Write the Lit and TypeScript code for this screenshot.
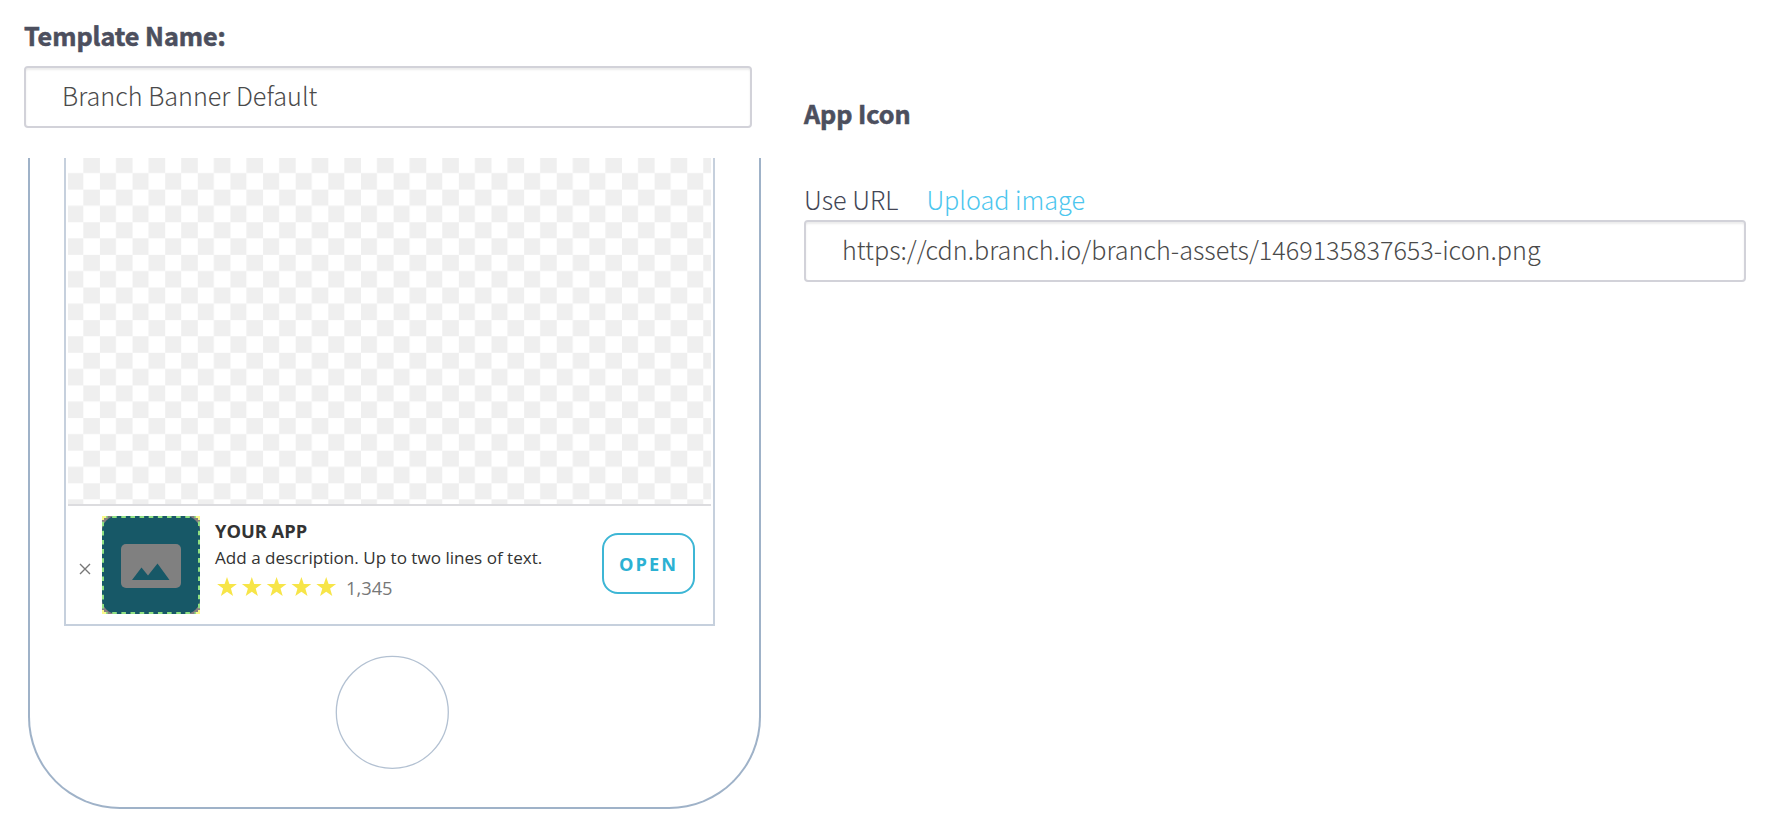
import { LitElement, html, css, svg } from "lit";
import { customElement } from "lit/decorators.js";

@customElement("app-root")
export class AppRoot extends LitElement {
  static styles = css`
    :host {
      display: flex;
      box-sizing: border-box;
      width: 1780px;
      height: 838px;
      background: #fff;
      padding-left: 24px;
      gap: 44px;
      overflow: hidden;
      color: #4c4f5e;
      font-family: "Noto Sans CJK SC", "Noto Sans", sans-serif;
      font-size: 25.17px;
      font-weight: 300;
    }
    .left { width: 736px; flex: none; }
    .right { width: 942px; flex: none; padding-top: 93px; }
    .title { font-weight: 700; line-height: 40px; height: 40px; white-space: nowrap; -webkit-text-stroke: 0.6px #4c4f5e; letter-spacing: -0.04px; }
    .left .title { margin-top: 15px; }
    .field {
      box-sizing: border-box;
      height: 62px;
      border: 2px solid #d2d2d9;
      border-radius: 4px;
      box-shadow: inset 0 2px 2px rgba(0, 0, 0, 0.075);
      padding: 0 36px;
      line-height: 54px;
      color: #4a4a4a;
      white-space: nowrap;
    }
    .left .field { width: 728px; margin-top: 11px; }
    .tabs { display: flex; gap: 28px; height: 40px; line-height: 40px; margin-top: 46px; white-space: nowrap; color: #434655; }
    .tabs .link { color: #4cc6ee; }
    .right .field { margin-top: 1px; }
    .phone {
      display: flex;
      flex-direction: column;
      align-items: center;
      box-sizing: border-box;
      width: 733px;
      height: 651px;
      margin: 30px 0 0 4px;
      border: 2px solid #9fb2c8;
      border-top: 0;
      border-radius: 0 0 92px 92px;
    }
    .screen {
      box-sizing: border-box;
      width: 651px;
      height: 468px;
      border: 2px solid #c6d0dd;
      border-top: 0;
      padding: 0 2px;
      margin-left: -10px;
    }
    .checker { display: block; width: 643px; height: 346px; }
    .banner {
      display: flex;
      height: 119px;
      width: 643px;
      border-top: 2px solid #dcdcdf;
      font-family: "Open Sans", "Noto Sans", sans-serif;
    }
    .close { margin: 57px 0 0 11px; width: 12px; height: 12px; flex: none; }
    .icon { margin: 10px 0 0 11px; width: 98px; height: 98px; flex: none; }
    .info { margin: 11px 0 0 15px; width: 387px; flex: none; white-space: nowrap; color: #333; }
    .app { font-size: 18.3px; line-height: 28px; font-weight: 700; }
    .desc { font-size: 17.08px; line-height: 26px; font-weight: 400; }
    .rating { display: flex; align-items: center; height: 32px; gap: 9px; font-size: 18.3px; font-weight: 400; color: #777; }
    .stars { width: 122px; height: 20px; }
    .open {
      box-sizing: border-box;
      flex: none;
      margin-top: 27px;
      width: 93px;
      height: 61px;
      border: 2px solid #3db6d5;
      border-radius: 16px;
      color: #2cb1d3;
      font-size: 18.2px;
      font-weight: 700;
      letter-spacing: 2px;
      line-height: 58px;
      text-align: center;
    }
    .home { width: 114px; height: 114px; margin: 29px 0 0 -5px; }
  `;

  private star(i: number) {
    return svg`<path transform="translate(${i * 24.8 + 12} 10.6)" fill="#f7e548"
      d="M0-10.600 2.400-3.500 9.900-3.500 3.900 1 6.100 8.500 0 4.200-6.100 8.500-3.900 1-9.900-3.500-2.400-3.500Z" />`;
  }

  render() {
    return html`
      <div class="left">
        <div class="title">Template Name:</div>
        <div class="field">Branch Banner Default</div>
        <div class="phone">
          <div class="screen">
            <svg class="checker" viewBox="0 0 643 346">
              <defs>
                <pattern id="checks" x="-0.7" y="-1" width="32.63" height="32.63" patternUnits="userSpaceOnUse">
                  <path d="M16 0h16.63v16H16zM0 16h16v16.63H0z" fill="#efefef" />
                </pattern>
              </defs>
              <rect width="643" height="346" fill="url(#checks)" />
            </svg>
            <div class="banner">
              <svg class="close" viewBox="0 0 12 12">
                <path d="M1 1 11 11M11 1 1 11" stroke="#777" stroke-width="1.4" />
              </svg>
              <svg class="icon" viewBox="0 0 98 98">
                <rect width="98" height="98" fill="#877f80" />
                <rect width="98" height="98" rx="15" fill="#175867" />
                <rect x="19" y="28" width="60" height="44" rx="5" fill="#808080" />
                <path d="M30 64 39.500 51.500 46 59.500 55.500 47.500 67.500 64Z" fill="#175867" />
                <rect x="1" y="1" width="96" height="96" fill="none" stroke="#90e081" stroke-width="2" stroke-dasharray="4.570 4.570" />
                <path d="M1 4V1H4M94 1H97V4M97 94V97H94M4 97H1V94"
                  fill="none" stroke="#faf98b" stroke-width="2" />
              </svg>
              <div class="info">
                <div class="app">YOUR APP</div>
                <div class="desc">Add a description. Up to two lines of text.</div>
                <div class="rating">
                  <svg class="stars" viewBox="0 0 122 20">${[0, 1, 2, 3, 4].map((i) => this.star(i))}</svg>
                  <span>1,345</span>
                </div>
              </div>
              <div class="open">OPEN</div>
            </div>
          </div>
          <svg class="home" viewBox="0 0 114 114">
            <circle cx="57.3" cy="57.3" r="56" fill="none" stroke="#b3c1d2" stroke-width="1.300" />
          </svg>
        </div>
      </div>
      <div class="right">
        <div class="title">App Icon</div>
        <div class="tabs"><span>Use URL</span><span class="link">Upload image</span></div>
        <div class="field">https://cdn.branch.io/branch-assets/1469135837653-icon.png</div>
      </div>
    `;
  }
}
